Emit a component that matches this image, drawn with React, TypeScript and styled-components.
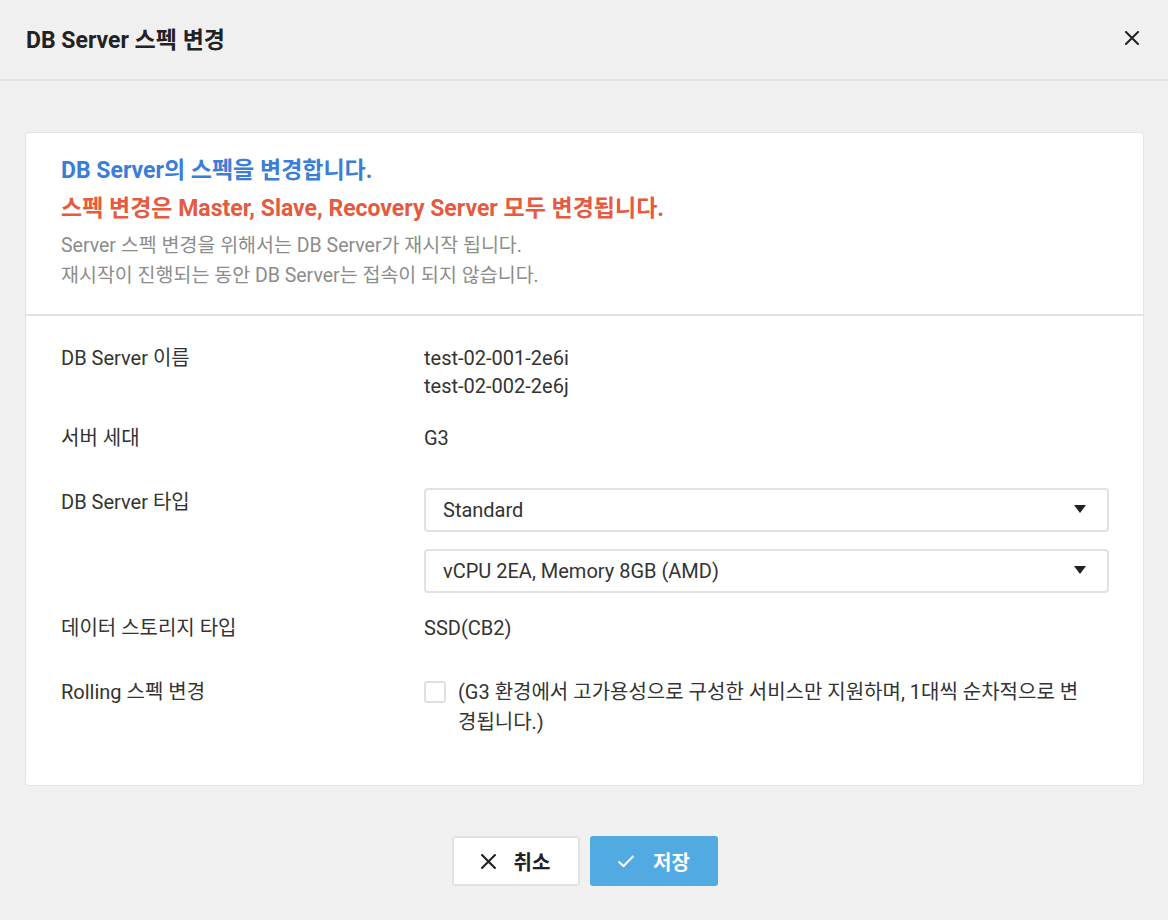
import styled, { createGlobalStyle } from 'styled-components'

const GlobalStyle = createGlobalStyle`
  html, body {
    margin: 0;
    padding: 0;
    background: #f0f0f0;
  }
  body {
    font-family: Roboto, "Noto Sans CJK KR", sans-serif;
    color: #333;
  }
  * {
    box-sizing: border-box;
  }
`

const Page = styled.div`
  width: 1168px;
  min-height: 920px;
  background: #f0f0f0;
`

const Header = styled.header`
  height: 81px;
  display: flex;
  align-items: center;
  justify-content: space-between;
  padding: 0 24px 4px 26px;
  border-bottom: 2px solid #e2e2e2;
`

const Title = styled.h1`
  margin: 0;
  font-size: 23px;
  font-weight: 700;
  color: #222;
`

const CloseButton = styled.button`
  width: 24px;
  height: 24px;
  padding: 0;
  border: none;
  background: none;
  display: flex;
  align-items: center;
  justify-content: center;
  cursor: pointer;
`

const Body = styled.main`
  padding: 51px 24px 0 25px;
`

const Card = styled.section`
  background: #fff;
  border: 1px solid #e4e4e4;
  border-radius: 4px;
`

const Notice = styled.div`
  padding: 19px 35px 23px;
  border-bottom: 2px solid #e4e4e4;
`

const Headline = styled.p<{ $color: string }>`
  margin: 0;
  font-size: 23px;
  line-height: 38px;
  font-weight: 700;
  color: ${p => p.$color};
`

const Hint = styled.p<{ $first?: boolean }>`
  margin: ${p => (p.$first ? '3px' : '0')} 0 0;
  font-size: 19.5px;
  line-height: 30px;
  color: #8c8c8c;
`

const Form = styled.div`
  padding: 28px 34px 48px 35px;
`

const Row = styled.div<{ $top?: number }>`
  display: grid;
  grid-template-columns: 363px 1fr;
  margin-top: ${p => p.$top ?? 0}px;
  font-size: 20px;
  line-height: 28px;
  color: #333;
`

const Label = styled.div`
  color: #333;
`

const Values = styled.div`
  display: flex;
  flex-direction: column;
`

const Selects = styled.div`
  display: flex;
  flex-direction: column;
  gap: 17px;
`

const Select = styled.div`
  height: 44px;
  border: 2px solid #e2e2e2;
  border-radius: 4px;
  display: flex;
  align-items: center;
  justify-content: space-between;
  padding: 0 21px 0 17px;
  font-size: 20px;
  color: #333;
`

const Arrow = styled.span`
  width: 0;
  height: 0;
  border-left: 6px solid transparent;
  border-right: 6px solid transparent;
  border-top: 8px solid #222;
  margin-top: -2px;
`

const CheckRow = styled.label`
  display: flex;
  align-items: flex-start;
  gap: 12px;
`

const Checkbox = styled.span`
  flex: none;
  width: 22px;
  height: 22px;
  margin-top: 3px;
  border: 2px solid #e0e0e0;
  border-radius: 3px;
  background: #fff;
`

const CheckText = styled.span`
  max-width: 624px;
  line-height: 30px;
  margin-top: -1px;
`

const Footer = styled.footer`
  display: flex;
  justify-content: center;
  gap: 10px;
  padding-top: 50px;
`

const Button = styled.button<{ $primary?: boolean }>`
  width: 128px;
  height: 50px;
  display: flex;
  align-items: center;
  justify-content: center;
  gap: 18px;
  border-radius: 3px;
  font-family: Roboto, "Noto Sans CJK KR", sans-serif;
  font-size: 20px;
  font-weight: 700;
  cursor: pointer;
  border: 2px solid ${p => (p.$primary ? '#52aae3' : '#e2e2e2')};
  background: ${p => (p.$primary ? '#52aae3' : '#fff')};
  color: ${p => (p.$primary ? '#fff' : '#222')};
`

const XIcon = ({ color = '#222', size = 14 }: { color?: string; size?: number }) => (
  <svg width={size} height={size} viewBox="0 0 14 14">
    <path d="M1 1L13 13M13 1L1 13" stroke={color} strokeWidth="2" strokeLinecap="square" fill="none" />
  </svg>
)

const CheckIcon = () => (
  <svg width="18" height="14" viewBox="0 0 18 14">
    <path d="M1.5 7.5L6.5 12L16.5 2" stroke="#fff" strokeWidth="2" fill="none" />
  </svg>
)

export default function App() {
  return (
    <Page>
      <GlobalStyle />
      <Header>
        <Title>DB Server 스펙 변경</Title>
        <CloseButton aria-label="닫기">
          <XIcon />
        </CloseButton>
      </Header>
      <Body>
        <Card>
          <Notice>
            <Headline $color="#3b7ed7">DB Server의 스펙을 변경합니다.</Headline>
            <Headline $color="#e55a40">스펙 변경은 Master, Slave, Recovery Server 모두 변경됩니다.</Headline>
            <Hint $first>Server 스펙 변경을 위해서는 DB Server가 재시작 됩니다.</Hint>
            <Hint>재시작이 진행되는 동안 DB Server는 접속이 되지 않습니다.</Hint>
          </Notice>
          <Form>
            <Row>
              <Label>DB Server 이름</Label>
              <Values>
                <span>test-02-001-2e6i</span>
                <span>test-02-002-2e6j</span>
              </Values>
            </Row>
            <Row $top={24}>
              <Label>서버 세대</Label>
              <Values>G3</Values>
            </Row>
            <Row $top={36}>
              <Label>DB Server 타입</Label>
              <Selects>
                <Select>
                  Standard
                  <Arrow />
                </Select>
                <Select>
                  vCPU 2EA, Memory 8GB (AMD)
                  <Arrow />
                </Select>
              </Selects>
            </Row>
            <Row $top={21}>
              <Label>데이터 스토리지 타입</Label>
              <Values>SSD(CB2)</Values>
            </Row>
            <Row $top={36}>
              <Label>Rolling 스펙 변경</Label>
              <CheckRow>
                <Checkbox />
                <CheckText>(G3 환경에서 고가용성으로 구성한 서비스만 지원하며, 1대씩 순차적으로 변경됩니다.)</CheckText>
              </CheckRow>
            </Row>
          </Form>
        </Card>
        <Footer>
          <Button>
            <XIcon size={15} />
            취소
          </Button>
          <Button $primary>
            <CheckIcon />
            저장
          </Button>
        </Footer>
      </Body>
    </Page>
  )
}
